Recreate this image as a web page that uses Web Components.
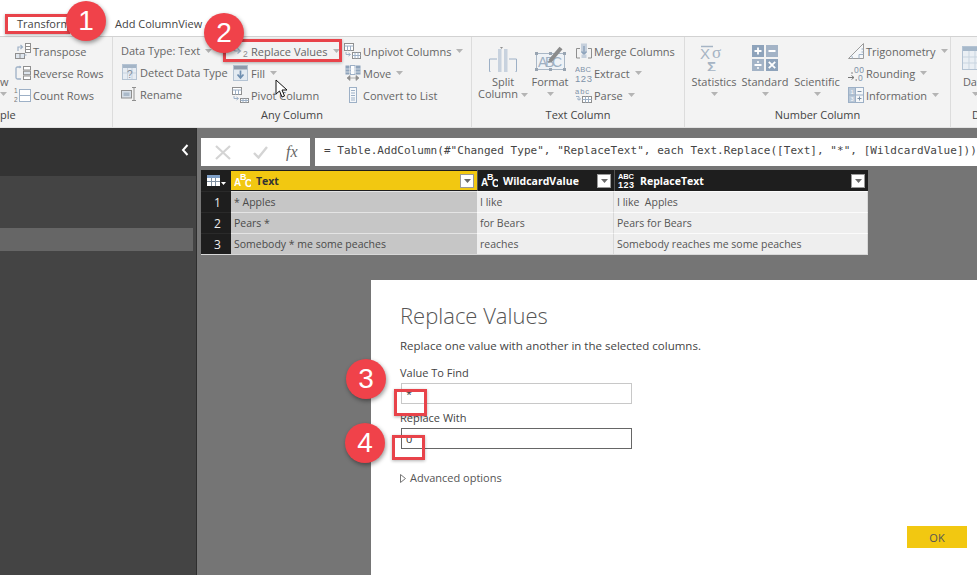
<!doctype html>
<html>
<head>
<meta charset="utf-8">
<style>
  html, body { margin: 0; height: 100%; overflow: hidden; }
  body { font-family: "Open Sans", "Noto Sans", sans-serif; font-size: 11px; color: #666; background: #fff; }
  #page { position: relative; width: 977px; height: 575px; overflow: hidden; display: flex; flex-direction: column; }
</style>
</head>
<body>
<div id="page">
  <tab-bar></tab-bar>
  <ribbon-bar>
    <ribbon-group label="ple" width="113" align="left">
      <ribbon-big width="14" caret="left" icon="">w</ribbon-big>
      <ribbon-col>
        <ribbon-item icon="transpose">Transpose</ribbon-item>
        <ribbon-item icon="reverse">Reverse Rows</ribbon-item>
        <ribbon-item icon="count">Count Rows</ribbon-item>
      </ribbon-col>
    </ribbon-group>
    <ribbon-group label="Any Column" width="359" pad="8">
      <ribbon-col width="111">
        <ribbon-item caret>Data Type: Text</ribbon-item>
        <ribbon-item icon="detect">Detect Data Type</ribbon-item>
        <ribbon-item icon="rename">Rename</ribbon-item>
      </ribbon-col>
      <ribbon-col width="112">
        <ribbon-item icon="replace" caret>Replace Values</ribbon-item>
        <ribbon-item icon="fill" caret>Fill</ribbon-item>
        <ribbon-item icon="pivot">Pivot Column</ribbon-item>
      </ribbon-col>
      <ribbon-col>
        <ribbon-item icon="unpivot" caret>Unpivot Columns</ribbon-item>
        <ribbon-item icon="move" caret>Move</ribbon-item>
        <ribbon-item icon="list">Convert to List</ribbon-item>
      </ribbon-col>
    </ribbon-group>
    <ribbon-group label="Text Column" width="213" pad="7">
      <ribbon-big width="48" icon="split" inline-caret>Split<br>Column</ribbon-big>
      <ribbon-big width="46" icon="format" caret="below">Format</ribbon-big>
      <ribbon-col width="110" gap="2">
        <ribbon-item icon="merge">Merge Columns</ribbon-item>
        <ribbon-item icon="extract" caret>Extract</ribbon-item>
        <ribbon-item icon="parse" caret>Parse</ribbon-item>
      </ribbon-col>
    </ribbon-group>
    <ribbon-group label="Number Column" width="266" pad="3">
      <ribbon-big width="52" icon="stats" caret="below">Statistics</ribbon-big>
      <ribbon-big width="50" icon="standard" caret="below">Standard</ribbon-big>
      <ribbon-big width="54" icon="scientific" caret="below">Scientific</ribbon-big>
      <ribbon-col gap="3">
        <ribbon-item icon="trig" caret>Trigonometry</ribbon-item>
        <ribbon-item icon="rounding" caret>Rounding</ribbon-item>
        <ribbon-item icon="information" caret>Information</ribbon-item>
      </ribbon-col>
    </ribbon-group>
    <ribbon-group label="Date &amp; Time Column" width="70" align="left" indent="21" last>
      <ribbon-big width="48" icon="date" caret="below">Date</ribbon-big>
    </ribbon-group>
  </ribbon-bar>
  <main-area>
    <query-pane></query-pane>
    <work-area>
      <formula-bar>= Table.AddColumn(#"Changed Type", "ReplaceText", each Text.Replace([Text], "*", [WildcardValue]))</formula-bar>
      <data-grid></data-grid>
      <replace-dialog></replace-dialog>
    </work-area>
  </main-area>

  <hl-box style="left:5px;top:14px;width:65px;height:20px"></hl-box>
  <hl-box style="left:223px;top:39px;width:119px;height:23px"></hl-box>
  <hl-box style="left:394px;top:389px;width:33px;height:27px"></hl-box>
  <hl-box style="left:392px;top:435px;width:33px;height:25px"></hl-box>
  <step-badge style="left:66px;top:1px">1</step-badge>
  <step-badge style="left:204px;top:13px">2</step-badge>
  <step-badge style="left:346px;top:359px">3</step-badge>
  <step-badge style="left:345px;top:423px">4</step-badge>
  <mouse-cursor style="left:275px;top:79px"></mouse-cursor>
</div>

<script>
const BLUE = "#9db0c6", GREY = "#8f8f8f";
// icons keep their own viewBox size, all drawn by hand
const ICONS = {
  transpose: [16, 16, `<rect x="10.5" y=".5" width="5" height="9" fill="#fff" stroke="${GREY}"/><path d="M10.5 3.5h5M10.5 6.5h5" stroke="${GREY}"/><rect x=".5" y="10.5" width="9" height="5" fill="#dfe6ee" stroke="${GREY}"/><path d="M5 10.5v5" stroke="${GREY}"/><path d="M3 8V4h4M5.5 2l2 2-2 2" fill="none" stroke="${BLUE}" stroke-width="1.2"/><path d="M9 12h2.5" stroke="${BLUE}"/>`],
  reverse: [16, 16, `<path d="M6 2H2.5Q1 2 1 3.500V12.500Q1 14 2.500 14H6" fill="none" stroke="${BLUE}" stroke-width="1.3"/><path d="M4.500 .5l2 1.500-2 1.500z" fill="${BLUE}"/><rect x="8.500" y="1.500" width="7" height="3.500" fill="#fff" stroke="${GREY}"/><rect x="8.500" y="6.200" width="7" height="3.500" fill="#dfe6ee" stroke="${GREY}"/><rect x="8.500" y="11" width="7" height="3.500" fill="#fff" stroke="${GREY}"/>`],
  count: [17, 16, `<text x="0" y="6" font-size="6.500" fill="#777" font-family="Liberation Sans">1</text><text x="0" y="15" font-size="6.500" fill="#777" font-family="Liberation Sans">2</text><rect x="5.500" y="2.500" width="11" height="12" fill="#fff" stroke="${BLUE}"/><path d="M5.500 8.500h11" stroke="${BLUE}"/>`],
  detect: [15, 16, `<rect x=".5" y=".5" width="14" height="15" fill="#e6ecf3" stroke="#b4c3d3"/><rect x="1" y="1" width="13" height="3" fill="#a4b5c7"/><path d="M5.500 4v11M10 4v11M1 9h13" stroke="#c8d3df"/><text x="5" y="14" font-size="10" font-family="Liberation Sans" fill="#7d8b99">?</text>`],
  rename: [17, 14, `<rect x=".5" y="3.500" width="10" height="7.500" fill="#d6deE7" stroke="${GREY}"/><rect x="2.500" y="5.500" width="6" height="3.500" fill="#aab9c9"/><path d="M11 .5h4M11 13.500h4M13 .5v13" stroke="${GREY}" fill="none"/>`],
  replace: [17, 12, `<path d="M1 2q0 4 3 4h4M5.500 3.500l3 2.500-3 2.500" fill="none" stroke="${BLUE}" stroke-width="1.200"/><text x="11" y="11.500" font-size="8.500" font-family="Liberation Sans" fill="#8a8a8a">2</text>`],
  fill: [15, 16, `<rect x=".5" y=".5" width="14" height="15" fill="#e3eaf1" stroke="#b4c3d3"/><rect x="1" y="1" width="13" height="3.500" fill="#8e9bab"/><path d="M7.500 5.500v7M4.500 9.500l3 3.500 3-3.500" fill="none" stroke="#6f8fb0" stroke-width="1.700"/>`],
  pivot: [17, 16, `<rect x=".5" y=".5" width="9" height="7" fill="#fff" stroke="${GREY}"/><path d="M.5 3h9M3.500 3v4.500M6.500 3v4.500" stroke="${BLUE}"/><rect x="8.500" y="11.500" width="8" height="4" fill="#fff" stroke="${GREY}"/><path d="M8.500 13.500h8M11 11.500v4M14 11.500v4" stroke="${BLUE}"/><path d="M2 9v2.500h4M4.500 10l2 1.500-2 1.500" fill="none" stroke="${BLUE}"/>`],
  unpivot: [17, 16, `<rect x=".5" y=".5" width="9" height="7" fill="#fff" stroke="${GREY}"/><path d="M.5 3h9M3.500 3v4.500M6.500 3v4.500" stroke="${BLUE}"/><rect x="8.500" y="9.500" width="8" height="6" fill="#fff" stroke="${GREY}"/><path d="M8.500 12.500h8M11 9.500v6M14 9.500v6" stroke="${BLUE}"/><path d="M2 9v2.500h4M4.500 10l2 1.500-2 1.500" fill="none" stroke="${BLUE}"/>`],
  move: [16, 16, `<rect x=".5" y=".5" width="4" height="9" fill="#8ea3bb"/><rect x="5.500" y=".5" width="4.500" height="9" fill="#fff" stroke="${BLUE}"/><rect x="11" y=".5" width="4.500" height="9" fill="#8ea3bb"/><path d="M.5 4h15M.5 7h15" stroke="#eef2f6" stroke-width=".7"/><path d="M4 13h8M2 13l3-2.500v5zM14 13l-3-2.500v5z" fill="${GREY}" stroke="${GREY}" stroke-width=".7"/>`],
  list: [8, 16, `<rect x=".5" y=".5" width="7" height="15" fill="#f6f8fa" stroke="${BLUE}"/><path d="M2 3.500h4M2 6h4M2 8.500h4M2 11h4M2 13h4" stroke="${BLUE}"/>`],
  merge: [16, 16, `<path d="M4 5.500H.5v9.500H4M12 5.500h3.500v9.500H12" fill="none" stroke="${GREY}"/><rect x="5" y=".5" width="6" height="9" fill="#c6d0dc"/><path d="M8 3v8M5.500 8.500L8 11.500l2.500-3" fill="none" stroke="#8ea3bb" stroke-width="1.400"/><rect x="5.500" y="11.500" width="5" height="3.500" fill="#c6d0dc"/>`],
  extract: [17, 17, `<text x="0" y="7" font-size="7.500" fill="#7e92a8" font-family="Liberation Sans" textLength="16">ABC</text><text x="0" y="16.500" font-size="9.500" fill="#7e92a8" font-family="Liberation Sans" textLength="17">123</text>`],
  parse: [17, 16, `<text x="0" y="6.500" font-size="7.500" fill="#7e92a8" font-family="Liberation Sans" textLength="14">abc</text><path d="M1 9.500h3v3.500M2 11.500l2 1.700 2-1.700" fill="none" stroke="${BLUE}"/><rect x="7.500" y="9.500" width="9" height="6" fill="#fff" stroke="${GREY}"/><path d="M7.500 12.500h9M10.500 9.500v6M13.500 9.500v6" stroke="${BLUE}"/>`],
  split: [28, 28, `<path d="M11 3l3 0 -1.500 2z" fill="${GREY}"/><path d="M.5 27.500V15H8M20 15h7.500v12.500M.5 27.500h1M26.500 27.500h1" fill="none" stroke="${BLUE}"/><rect x="9" y="5" width="3.500" height="23" fill="#c8d2de"/><rect x="15" y="5" width="3.500" height="23" fill="#c8d2de"/>`],
  format: [32, 28, `<rect x="2.500" y="9.500" width="28" height="16" fill="#eef2f6" stroke="#a9b7c6"/><rect x="1" y="8" width="3" height="3" fill="#98a4b1"/><rect x="29" y="8" width="3" height="3" fill="#98a4b1"/><rect x="1" y="24" width="3" height="3" fill="#98a4b1"/><rect x="29" y="24" width="3" height="3" fill="#98a4b1"/><rect x="15" y="24" width="3" height="3" fill="#98a4b1"/><rect x="15" y="8" width="3" height="3" fill="#98a4b1"/><text x="4" y="23" font-size="14" fill="#9dafc2" font-family="Liberation Sans" textLength="24">ABC</text><path d="M16 17L27 4" stroke="#8b8b8b" stroke-width="4"/><path d="M14 19l1-3 2.500 2z" fill="#8b8b8b"/>`],
  stats: [28, 26, `<path d="M1 1.500h12" stroke="#a6b4c4" stroke-width="1.500"/><text x="0" y="14" font-size="15" fill="#a6b4c4" font-family="Liberation Sans">X</text><text x="12" y="13" font-size="17" fill="#a6b4c4" font-family="Liberation Serif">σ</text><text x="7" y="27" font-size="15" font-weight="700" fill="#a6b4c4" font-family="Liberation Sans">Σ</text>`],
  standard: [26, 26, `<rect width="12" height="12" fill="#8ea3bb"/><rect x="14" width="12" height="12" fill="#a3b3c6"/><rect y="14" width="12" height="12" fill="#a3b3c6"/><rect x="14" y="14" width="12" height="12" fill="#8ea3bb"/><path d="M6 2.500v7M2.500 6h7M16.500 6h7M2.500 20h7M16.800 16.800l6.400 6.400M23.200 16.800l-6.400 6.400" stroke="#fff" stroke-width="1.800"/><circle cx="6" cy="17" r="1" fill="#fff"/><circle cx="6" cy="23" r="1" fill="#fff"/>`],
  trig: [16, 16, `<path d="M.5 15.500L15.500 .5v15z" fill="#f5f7f9" stroke="#9b9b9b"/><path d="M4.500 15.500a6 6 0 0 0-1-3M11 15.500v-4h4.500" fill="none" stroke="${BLUE}"/><path d="M15.500 6h-2M15.500 9h-2" stroke="${BLUE}"/>`],
  rounding: [16, 16, `<circle cx="4" cy="8" r=".8" fill="#777"/><text x="6" y="8" font-size="8.500" fill="#7e92a8" font-family="Liberation Sans" textLength="10">00</text><path d="M0 12.500h6M3.500 10.500l2.500 2-2.500 2" fill="none" stroke="#777"/><circle cx="8.200" cy="15" r=".8" fill="#777"/><text x="10" y="16" font-size="8.500" fill="#7e92a8" font-family="Liberation Sans">0</text>`],
  information: [16, 16, `<rect x=".5" y=".5" width="15" height="15" fill="#f5f7f9" stroke="${BLUE}"/><rect x="1" y="1" width="6" height="14" fill="#b9c8d8"/><path d="M7.500 .5v15M.5 8h15" stroke="${BLUE}"/><path d="M9.500 4.500h4M11.500 9.500v4M9.500 11.500h4" stroke="#7e92a8"/><text x="2.500" y="6.500" font-size="5.500" fill="#fff" font-family="Liberation Sans">1</text><text x="2.500" y="13.500" font-size="5.500" fill="#fff" font-family="Liberation Sans">3</text>`],
  date: [26, 24, `<rect x=".5" y=".5" width="25" height="23" fill="#eaeff4" stroke="#b4c3d3"/><rect x="1" y="1" width="24" height="4" fill="#a6b8ca"/><path d="M7 5v18M13 5v18M19 5v18M1 11h24M1 17h24" stroke="#c9d5e0"/>`],
};

function iconSvg(name) {
  const i = ICONS[name];
  if (!i) return "";
  return `<svg width="${i[0]}" height="${i[1]}" viewBox="0 0 ${i[0]} ${i[1]}" aria-hidden="true">${i[2]}</svg>`;
}
const CARET = `<svg class="caret" width="7" height="4" viewBox="0 0 7 4"><path d="M0 0h7L3.500 4z" fill="#b4b4b4"/></svg>`;

class TabBar extends HTMLElement {
  constructor() {
    super();
    this.attachShadow({ mode: "open" });
    this.shadowRoot.innerHTML = `
      <style>
        :host { display: flex; height: 36px; box-sizing: border-box; padding: 17px 0 0 17px; background: #fff; color: #444; font-size: 11px; line-height: 14px; flex: none; }
        span:nth-child(1) { width: 75px; }
        span:nth-child(2) { width: 98px; }
      </style>
      <span>Transform</span><span>Add Column</span><span>View</span>`;
  }
}

class RibbonBar extends HTMLElement {
  constructor() {
    super();
    this.attachShadow({ mode: "open" });
    this.shadowRoot.innerHTML = `
      <style>
        :host { display: flex; height: 91px; flex: none; background: #f3f3f3; border-top: 1px solid #d2d2d2; box-sizing: border-box; overflow: hidden; }
      </style>
      <slot></slot>`;
  }
}

class RibbonGroup extends HTMLElement {
  constructor() {
    super();
    this.attachShadow({ mode: "open" });
    const w = this.getAttribute("width");
    const pad = this.getAttribute("pad") || 0;
    const left = this.getAttribute("align") === "left";
    const indent = this.getAttribute("indent") || 0;
    this.shadowRoot.innerHTML = `
      <style>
        :host { display: flex; flex-direction: column; flex: none; width: ${w}px; box-sizing: border-box; border-right: ${this.hasAttribute("last") ? 0 : 1}px solid #dcdcdc; }
        .body { display: flex; height: 68px; box-sizing: border-box; padding: 3px 0 0 ${pad}px; }
        .label { height: 20px; line-height: 19px; font-size: 11px; color: #444; white-space: nowrap; text-align: ${left ? "left" : "center"}; padding-left: ${indent}px; }
      </style>
      <div class="body"><slot></slot></div>
      <div class="label">${this.getAttribute("label").replace("&", "&amp;")}</div>`;
  }
}

class RibbonCol extends HTMLElement {
  constructor() {
    super();
    this.attachShadow({ mode: "open" });
    const w = this.getAttribute("width");
    const gap = this.getAttribute("gap") || 0;
    this.shadowRoot.innerHTML = `
      <style>
        :host { display: flex; flex-direction: column; flex: none; ${w ? `width:${w}px;` : ""} margin-left: ${gap}px; }
      </style>
      <slot></slot>`;
  }
}

class RibbonItem extends HTMLElement {
  constructor() {
    super();
    this.attachShadow({ mode: "open" });
    const icon = this.getAttribute("icon");
    this.shadowRoot.innerHTML = `
      <style>
        :host { display: flex; align-items: center; height: 22px; white-space: nowrap; color: #666; }
        .ico { display: flex; align-items: center; justify-content: center; width: 17px; height: 22px; margin-right: 2px; flex: none; }
        .caret { margin-left: 5px; }
      </style>
      ${icon ? `<span class="ico">${iconSvg(icon)}</span>` : ""}<slot></slot>${this.hasAttribute("caret") ? CARET : ""}`;
  }
}

class RibbonBig extends HTMLElement {
  constructor() {
    super();
    this.attachShadow({ mode: "open" });
    const w = this.getAttribute("width");
    const caret = this.getAttribute("caret");
    const left = caret === "left";
    this.shadowRoot.innerHTML = `
      <style>
        :host { display: flex; flex-direction: column; flex: none; width: ${w}px; align-items: ${left ? "flex-start" : "center"}; white-space: nowrap; text-align: center; color: #666; line-height: 12px; }
        .pic { height: 36px; display: flex; align-items: center; justify-content: center; margin-bottom: 0; }
        .txt { display: block; }
        .caret { display: block; margin-top: 4px; margin-left: ${left ? 0 : "auto"}; margin-right: ${left ? 0 : "auto"}; }
        .inline { margin-left: 3px; display: inline-block; margin-top: 0; vertical-align: middle; }
        svg { display: block; }
        .lbl { margin-top: 0; }
      </style>
      <div class="pic">${iconSvg(this.getAttribute("icon"))}</div>
      <div class="lbl"><slot></slot>${this.hasAttribute("inline-caret") ? CARET.replace('class="caret"', 'class="inline"') : ""}</div>
      ${caret ? CARET : ""}`;
  }
}

class MainArea extends HTMLElement {
  constructor() {
    super();
    this.attachShadow({ mode: "open" });
    this.shadowRoot.innerHTML = `
      <style>
        :host { display: flex; flex: 1; min-height: 0; background: #757575; border-top: 1px solid #e2e2e2; }
      </style>
      <slot></slot>`;
  }
}

class QueryPane extends HTMLElement {
  constructor() {
    super();
    this.attachShadow({ mode: "open" });
    this.shadowRoot.innerHTML = `
      <style>
        :host { display: flex; flex-direction: column; flex: none; width: 197px; box-sizing: border-box; background: #444; border-right: 1px solid #2e2e2e; }
        .head { height: 48px; background: #333; display: flex; align-items: center; justify-content: flex-end; padding-right: 7px; flex: none; box-sizing: border-box; padding-bottom: 5px; }
        .list { padding-top: 52px; }
        .sel { height: 23px; width: 193px; background: #666; }
      </style>
      <div class="head"><svg width="8" height="12" viewBox="0 0 8 12"><path d="M6.500 1L2 6l4.500 5" fill="none" stroke="#fff" stroke-width="2"/></svg></div>
      <div class="list"><div class="sel"></div></div>`;
  }
}

class WorkArea extends HTMLElement {
  constructor() {
    super();
    this.attachShadow({ mode: "open" });
    this.shadowRoot.innerHTML = `
      <style>
        :host { display: flex; flex-direction: column; flex: 1; min-width: 0; padding: 10px 0 0 4px; box-sizing: border-box; }
      </style>
      <slot></slot>`;
  }
}

class FormulaBar extends HTMLElement {
  constructor() {
    super();
    this.attachShadow({ mode: "open" });
    this.shadowRoot.innerHTML = `
      <style>
        :host { display: flex; gap: 5px; height: 28px; flex: none; }
        .btns { width: 109px; background: #fff; display: flex; align-items: center; box-sizing: border-box; padding-left: 14px; }
        .btns svg { display: block; flex: none; }
        .fx { font: italic 16px "Liberation Serif", serif; color: #666; margin-left: 18px; }
        .text { flex: 1; background: #fff; font: 11px/26px "DejaVu Sans Mono", monospace; color: #444; padding-left: 9px; white-space: pre; overflow: hidden; letter-spacing: .04px; }
      </style>
      <div class="btns">
        <svg width="16" height="15" viewBox="0 0 16 15"><path d="M1 1l14 13M15 1L1 14" stroke="#d4d4d4" stroke-width="2.200"/></svg>
        <svg width="15" height="13" viewBox="0 0 15 13" style="margin-left:22px"><path d="M1 7l4.500 4.500L14 1" fill="none" stroke="#d4d4d4" stroke-width="2.400"/></svg>
        <span class="fx">fx</span>
      </div>
      <div class="text"><slot></slot></div>`;
  }
}

class DataGrid extends HTMLElement {
  constructor() {
    super();
    this.attachShadow({ mode: "open" });
    const rows = [
      ["* Apples", "I like", "I like  Apples"],
      ["Pears *", "for Bears", "Pears for Bears"],
      ["Somebody * me some peaches", "reaches", "Somebody reaches me some peaches"],
    ];
    const abc = (c) => `<svg width="17" height="15" viewBox="0 0 17 15"><text x="0" y="13" font-size="10" fill="${c}" font-family="Liberation Sans">A</text><text x="6" y="7" font-size="9" fill="${c}" font-family="Liberation Sans">B</text><text x="11" y="14" font-size="10" fill="${c}" font-family="Liberation Sans">C</text></svg>`;
    const num = `<svg width="17" height="17" viewBox="0 0 17 17"><text x="0" y="7" font-size="7.500" fill="#fff" font-family="Liberation Sans" textLength="16">ABC</text><text x="0" y="16" font-size="9" fill="#fff" font-family="Liberation Sans" textLength="16">123</text></svg>`;
    const drop = `<span class="drop"><svg width="7" height="4" viewBox="0 0 7 4"><path d="M0 0h7L3.500 4z" fill="#6b6b6b"/></svg></span>`;
    let body = "";
    rows.forEach((r, i) => {
      body += `<div class="num">${i + 1}</div><div class="cell sel">${r[0]}</div><div class="cell">${r[1]}</div><div class="cell">${r[2]}</div>`;
    });
    this.shadowRoot.innerHTML = `
      <style>
        :host { display: grid; grid-template-columns: 30px 246px 137px 254px; grid-auto-rows: 21px; width: 667px; height: 85px; margin-top: 4px; flex: none; background: #1e1e1e; font-size: 10.500px; border-bottom: 1px solid #d8d8d8; box-sizing: border-box; }
        .corner { display: flex; align-items: center; padding-left: 6px; }
        .h { display: flex; align-items: center; color: #fff; font-weight: 700; padding: 0 3px 0 3px; box-sizing: border-box; border-left: 1px solid #555; }
        .h.active { background: #f2c811; color: #333; border: 1px solid #1e1e1e; border-width: 1px 0; }
        .h span.t { margin-left: 5px; flex: 1; }
        .drop { width: 14px; height: 14px; background: #fff; display: flex; align-items: center; justify-content: center; border: 1px solid #999; box-sizing: border-box; }
        .num { color: #eee; font-size: 12px; display: flex; align-items: center; justify-content: center; padding-left: 3px; border-top: 1px solid #2a2a2a; }
        .cell { background: #eee; color: #555; display: flex; align-items: center; padding-left: 3px; border-top: 1px solid #fbfbfb; border-right: 1px solid #d8d8d8; box-sizing: border-box; white-space: pre; }
        .cell.sel { background: #c6c6c6; color: #4a4a4a; border-right: 0; border-top-color: #e4e4e4; }
      </style>
      <div class="corner"><svg width="19" height="11" viewBox="0 0 19 11"><rect width="13" height="11" fill="#fff"/><rect width="13" height="3" fill="#7fa0c8"/><path d="M4.500 3v8M8.500 3v8M0 6.500h13" stroke="#7f8fa0"/><path d="M14 7h5l-2.500 3z" fill="#fff"/></svg></div>
      <div class="h active">${abc("#fff")}<span class="t">Text</span>${drop}</div>
      <div class="h">${abc("#fff")}<span class="t">WildcardValue</span>${drop}</div>
      <div class="h">${num}<span class="t">ReplaceText</span>${drop}</div>
      ${body}`;
  }
}

class ReplaceDialog extends HTMLElement {
  constructor() {
    super();
    this.attachShadow({ mode: "open" });
    this.shadowRoot.innerHTML = `
      <style>
        :host { display: block; flex: 1; margin: 25px 0 0 170px; background: #fff; box-sizing: border-box; padding: 19px 0 0 29px; color: #444; position: relative; font-size: 11px; overflow: hidden; }
        h1 { margin: 0; font-size: 22px; font-weight: 300; line-height: 32px; color: #555; }
        p { margin: 6px 0 0; font-size: 11.500px; line-height: 18px; color: #444; }
        label { display: block; line-height: 14px; color: #444; }
        .a { margin-top: 11px; }
        .b { margin-top: 7px; }
        .input { width: 231px; height: 21px; box-sizing: border-box; border: 1px solid #c8c8c8; margin: 3px 0 0 1px; padding-left: 4px; line-height: 19px; color: #333; }
        .input.on { border-color: #666; }
        .adv { margin-top: 22px; display: flex; align-items: center; gap: 4px; line-height: 14px; color: #555; }
        .foot { position: absolute; left: 536px; top: 246px; display: flex; gap: 13px; }
        .ok { width: 60px; height: 22px; background: #f2c811; color: #555; display: flex; align-items: center; justify-content: center; }
        .cancel { width: 60px; height: 22px; background: #f0f0f0; }
      </style>
      <h1>Replace Values</h1>
      <p>Replace one value with another in the selected columns.</p>
      <label class="a">Value To Find</label>
      <div class="input">*</div>
      <label class="b">Replace With</label>
      <div class="input on">0</div>
      <div class="adv"><svg width="6" height="9" viewBox="0 0 6 9"><path d="M.5.5l5 4-5 4z" fill="#fff" stroke="#777"/></svg>Advanced options</div>
      <div class="foot"><div class="ok">OK</div><div class="cancel"></div></div>`;
  }
}

class HlBox extends HTMLElement {
  constructor() {
    super();
    this.attachShadow({ mode: "open" });
    this.shadowRoot.innerHTML = `
      <style>
        :host { position: absolute; box-sizing: border-box; border: 3px solid #e8434a; box-shadow: 0 1px 3px rgba(0,0,0,.3); }
      </style>`;
  }
}

class StepBadge extends HTMLElement {
  constructor() {
    super();
    this.attachShadow({ mode: "open" });
    this.shadowRoot.innerHTML = `
      <style>
        :host { position: absolute; width: 40px; height: 40px; border-radius: 50%; background: #f0424a; color: #fff; display: flex; align-items: center; justify-content: center; font: 28px "Liberation Sans", sans-serif; box-shadow: 1px 2px 4px rgba(0,0,0,.4); }
      </style>
      <slot></slot>`;
  }
}

class MouseCursor extends HTMLElement {
  constructor() {
    super();
    this.attachShadow({ mode: "open" });
    this.shadowRoot.innerHTML = `
      <style>
        :host { position: absolute; display: block; width: 14px; height: 19px; }
        svg { display: block; }
      </style>
      <svg width="14" height="19" viewBox="0 0 14 19"><path d="M1 1v14l3.500-3 2.500 6 2.500-1-2.500-6h5z" fill="#fff" stroke="#111"/></svg>`;
  }
}

customElements.define("tab-bar", TabBar);
customElements.define("ribbon-bar", RibbonBar);
customElements.define("ribbon-group", RibbonGroup);
customElements.define("ribbon-col", RibbonCol);
customElements.define("ribbon-item", RibbonItem);
customElements.define("ribbon-big", RibbonBig);
customElements.define("main-area", MainArea);
customElements.define("query-pane", QueryPane);
customElements.define("work-area", WorkArea);
customElements.define("formula-bar", FormulaBar);
customElements.define("data-grid", DataGrid);
customElements.define("replace-dialog", ReplaceDialog);
customElements.define("hl-box", HlBox);
customElements.define("step-badge", StepBadge);
customElements.define("mouse-cursor", MouseCursor);
</script>
</body>
</html>
